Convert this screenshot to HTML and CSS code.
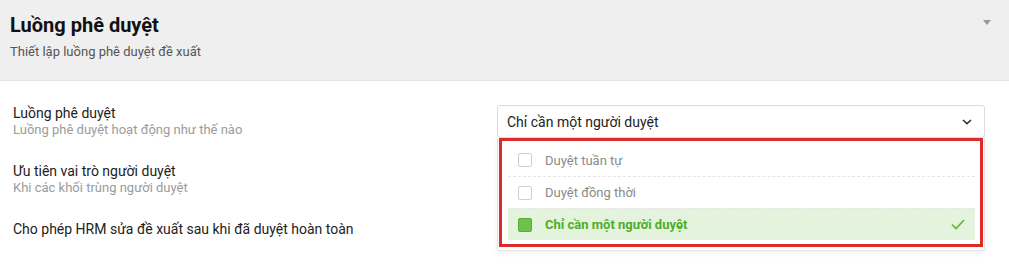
FILE: index.html
```html
<!DOCTYPE html>
<html lang="vi">
<head>
<meta charset="utf-8">
<link rel="stylesheet" href="styles.css">
</head>
<body>
<header class="hd">
  <h1 class="hd-title">Luồng phê duyệt</h1>
  <p class="hd-sub">Thiết lập luồng phê duyệt đề xuất</p>
  <span class="hd-caret"></span>
</header>
<main class="settings">
  <div class="row">
    <div class="lbl">
      <div class="lbl-t">Luồng phê duyệt</div>
      <div class="lbl-s">Luồng phê duyệt hoạt động như thế nào</div>
    </div>
    <div class="ctl">
      <div class="select">
        <span class="select-val">Chỉ cần một người duyệt</span>
        <svg class="chev" width="10" height="6" viewBox="0 0 10 6"><path d="M1 1 L5 4.6 L9 1" fill="none" stroke="#333" stroke-width="1.6"/></svg>
      </div>
      <div class="menu">
        <div class="menu-box">
          <div class="opt"><span class="cb"></span><span class="opt-t">Duyệt tuần tự</span></div>
          <div class="opt"><span class="cb"></span><span class="opt-t">Duyệt đồng thời</span></div>
          <div class="opt opt-on"><span class="cb cb-on"></span><span class="opt-t">Chỉ cần một người duyệt</span>
            <svg class="tick" width="14" height="11" viewBox="0 0 14 11"><path d="M1 5.5 L5 9.5 L13 1" fill="none" stroke="#5cb531" stroke-width="1.6"/></svg>
          </div>
        </div>
      </div>
    </div>
  </div>
  <div class="row">
    <div class="lbl">
      <div class="lbl-t">Ưu tiên vai trò người duyệt</div>
      <div class="lbl-s">Khi các khối trùng người duyệt</div>
    </div>
  </div>
  <div class="row">
    <div class="lbl">
      <div class="lbl-t">Cho phép HRM sửa đề xuất sau khi đã duyệt hoàn toàn</div>
    </div>
  </div>
</main>
</body>
</html>
```
FILE: styles.css
```css
* { box-sizing: border-box; }
html, body { margin: 0; padding: 0; background: #fff; }
body {
  font-family: Roboto, "Liberation Sans", sans-serif;
  color: #222;
  width: 1009px;
  height: 275px;
  overflow: hidden;
}
.hd {
  position: relative;
  height: 81px;
  background: #efefef;
  border-bottom: 1px solid #e4e4e4;
  padding: 13px 10px 0;
}
.hd-title {
  margin: 0;
  font-size: 20px;
  line-height: 24px;
  font-weight: 700;
  color: #111;
}
.hd-sub {
  margin: 6px 0 0;
  font-size: 13px;
  line-height: 18px;
  color: #555;
}
.hd-caret {
  position: absolute;
  right: 18px;
  top: 20px;
  width: 0;
  height: 0;
  border-left: 4px solid transparent;
  border-right: 4px solid transparent;
  border-top: 5px solid #9a9a9a;
}
.settings {
  padding: 24px 24px 0 13px;
}
.row {
  display: flex;
  justify-content: space-between;
  align-items: flex-start;
  margin-bottom: 25px;
}
.lbl-t {
  font-size: 14px;
  line-height: 17px;
  color: #222;
}
.lbl-s {
  font-size: 13px;
  line-height: 16px;
  color: #9b9b9b;
}
.ctl {
  position: relative;
  width: 488px;
}
.select {
  height: 33px;
  border: 1px solid #dcdcdc;
  border-radius: 3px;
  display: flex;
  align-items: center;
  justify-content: space-between;
  padding: 0 12px 0 9px;
  font-size: 14px;
  color: #222;
}
.chev { display: block; }
.menu {
  position: absolute;
  top: 33px;
  left: 0;
  right: 0;
  background: #fff;
  border: 1px solid #e2e2e2;
  border-top: none;
  border-radius: 0 0 3px 3px;
  box-shadow: 0 2px 6px rgba(0,0,0,0.06);
  padding: 0 1px 3px;
  z-index: 5;
}
.menu-box {
  border: 3px solid #dc2b2b;
  padding: 3px 5px 4px 6px;
}
.opt {
  height: 32px;
  display: flex;
  align-items: center;
  padding-left: 10px;
  font-size: 13px;
  color: #8a8a8a;
}
.opt + .opt { border-top: 1px dashed #e6e6e6; }
.cb {
  width: 14px;
  height: 14px;
  border: 1px solid #cfcfcf;
  border-radius: 2px;
  margin-right: 13px;
  flex: none;
}
.cb-on {
  background: #6cc24a;
  border-color: #58ad38;
}
.opt-on {
  background: #e3f3de;
  color: #4fae28;
  font-weight: 700;
}
.opt-t { flex: 1; }
.tick { margin-right: 10px; }
```
